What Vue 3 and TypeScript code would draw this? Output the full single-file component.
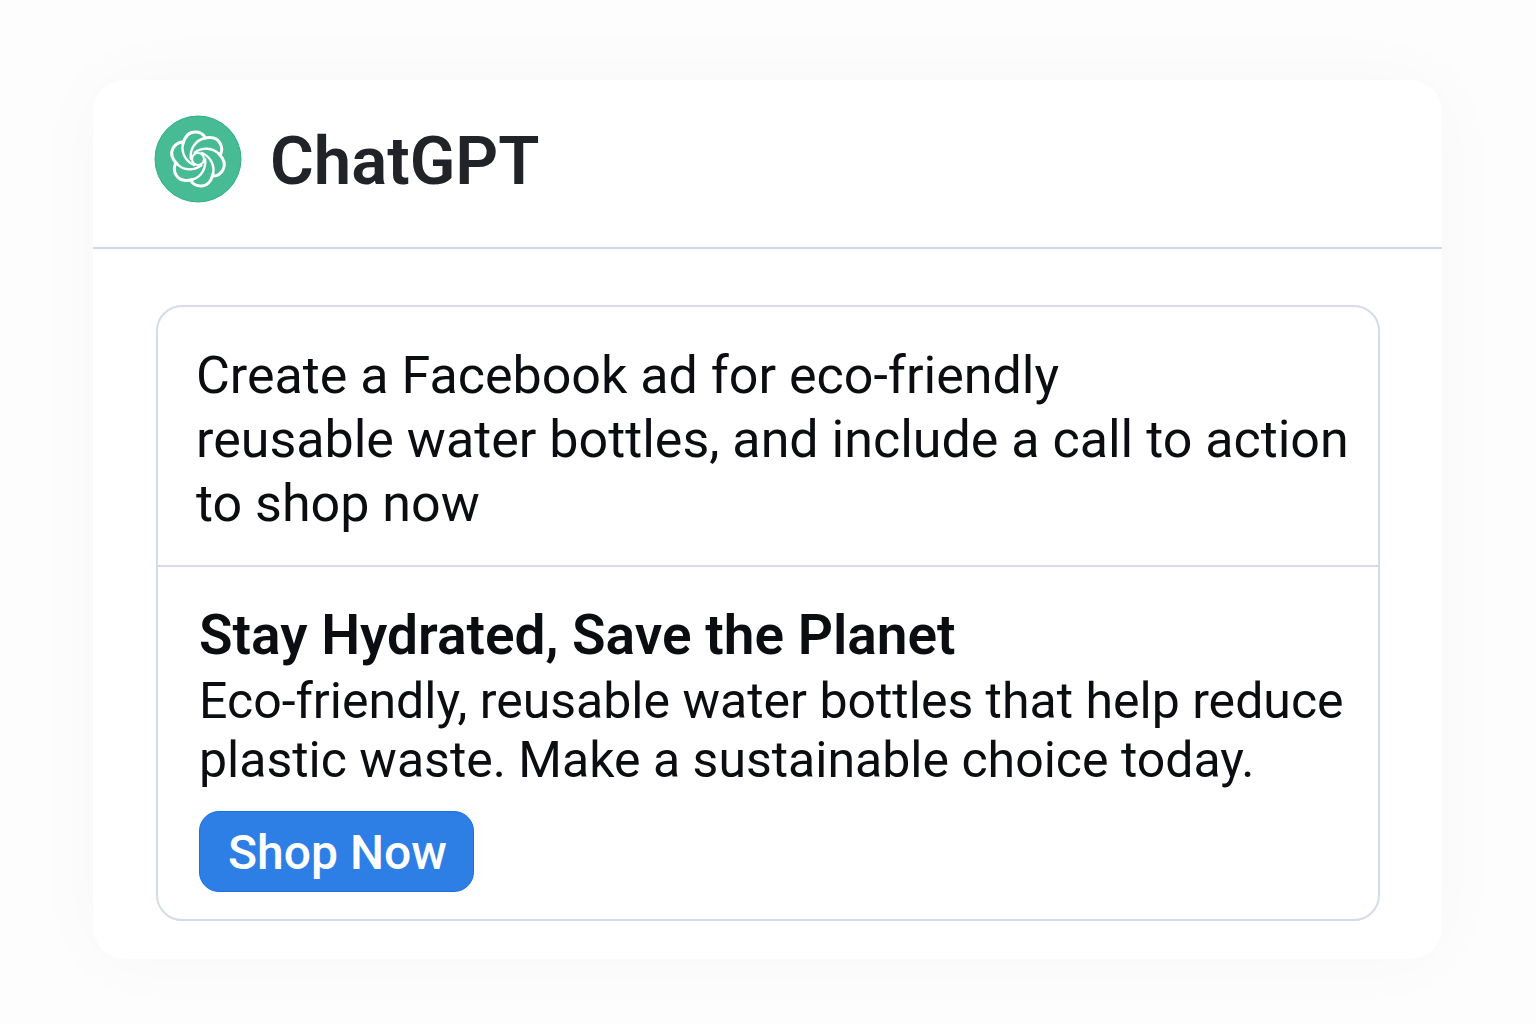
<script setup lang="ts">
const petals: number[] = [0, 60, 120, 180, 240, 300]
const promptLines: string[] = [
  'Create a Facebook ad for eco-friendly',
  'reusable water bottles, and include a call to action',
  'to shop now',
]
const bodyLines: string[] = [
  'Eco-friendly, reusable water bottles that help reduce',
  'plastic waste. Make a sustainable choice today.',
]
</script>

<template>
  <main class="page">
    <section class="card">
      <header class="head">
        <svg class="logo" viewBox="-44 -44 88 88" aria-hidden="true">
          <circle r="43" fill="#47bb94" stroke="#2bb183" />
          <g fill="none" stroke="#fff" stroke-width="3" stroke-linecap="round">
            <circle r="6" stroke-width="2.2" />
            <g v-for="angle in petals" :key="angle" :transform="`rotate(${angle})`">
              <path d="M-15 -15C-13 -23 -9 -27 -3 -27C1 -27 5 -25 7 -22" />
              <path stroke-width="2.4" d="M-15 -15C-17 -7 -13 2 -4 6" />
            </g>
          </g>
        </svg>
        <h1 class="brand">ChatGPT</h1>
      </header>
      <div class="content">
        <article class="chat">
          <p class="prompt">
            <span v-for="line in promptLines" :key="line" class="line">{{ line }}</span>
          </p>
          <div class="answer">
            <h2 class="title">Stay Hydrated, Save the Planet</h2>
            <p class="copy">
              <span v-for="line in bodyLines" :key="line" class="line">{{ line }}</span>
            </p>
            <button class="cta" type="button">Shop Now</button>
          </div>
        </article>
      </div>
    </section>
  </main>
</template>

<style>
body {
  margin: 0;
  background: #fdfdfd;
}
</style>

<style scoped>
.page {
  box-sizing: border-box;
  min-height: 100vh;
  padding: 80px 94px 64px 93px;
  font-family: Roboto, "Liberation Sans", sans-serif;
  color: #0b0d11;
}
.card {
  border-radius: 32px;
  background: #fff;
  box-shadow: 0 0 80px rgba(0, 0, 0, 0.026);
}
.head {
  display: flex;
  align-items: center;
  gap: 28px;
  padding: 35px 61px 44px;
  border-bottom: 2px solid #d0dae4;
}
.logo {
  flex: none;
  width: 88px;
  height: 88px;
}
.brand {
  margin: 0;
  padding-top: 4px;
  font-size: 67px;
  line-height: 80px;
  font-weight: 600;
  color: #212328;
}
.content {
  padding: 56px 62px 38px 63px;
}
.chat {
  border: 2px solid #d5dce5;
  border-radius: 26px;
}
.line {
  display: block;
  white-space: nowrap;
}
.prompt {
  margin: 0;
  padding: 37px 20px 29px 38px;
  border-bottom: 2px solid #d5dce5;
  font-size: 52px;
  line-height: 64px;
}
.answer {
  padding: 34px 16px 27px 41px;
}
.title {
  margin: 0 0 3px;
  font-size: 55px;
  line-height: 68px;
  font-weight: 600;
}
.copy {
  margin: 0 0 21px;
  font-size: 50px;
  line-height: 59px;
}
.cta {
  display: block;
  height: 81px;
  padding: 2px 26px 0 28px;
  border: 1px solid #1a6fe0;
  border-radius: 20px;
  background: #2d7fe6;
  color: #fff;
  font-family: inherit;
  font-size: 48px;
  font-weight: 500;
}
</style>
